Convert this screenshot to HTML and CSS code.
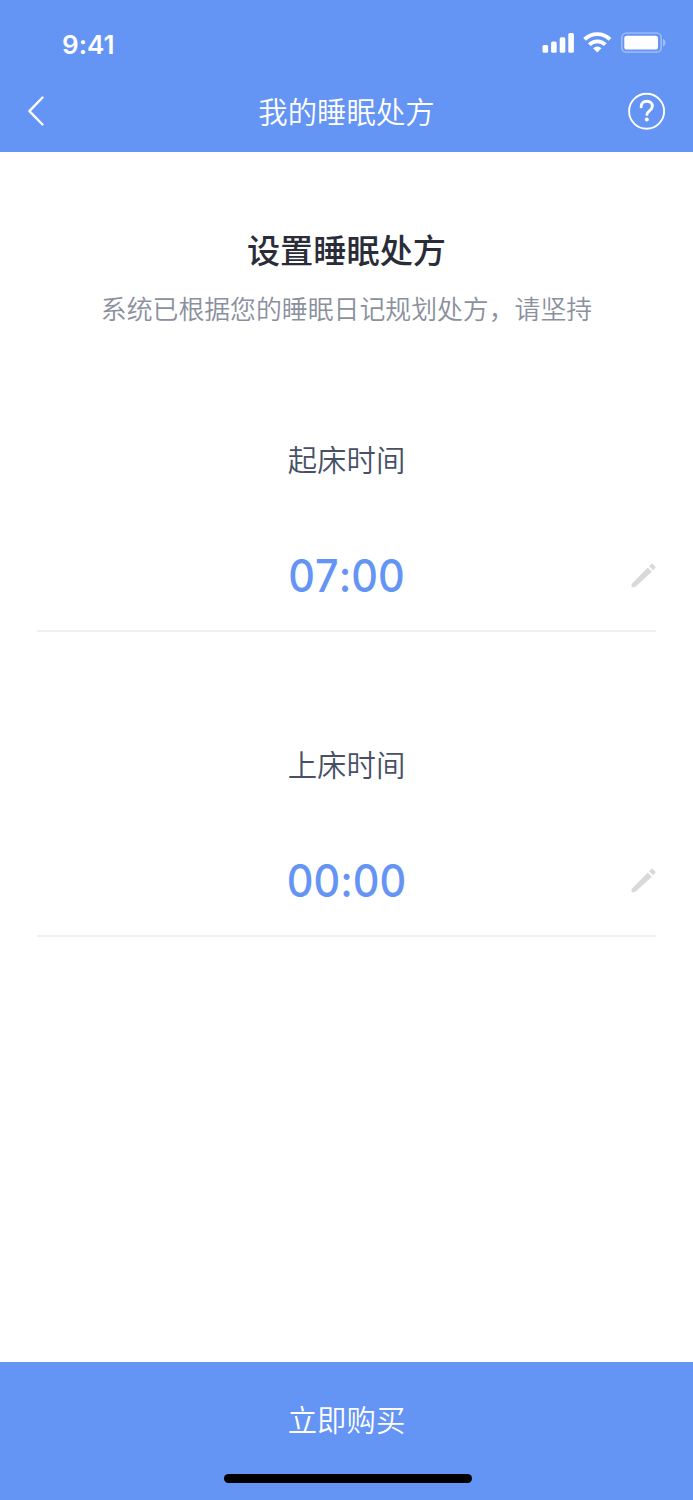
FILE: index.html
```html
<!DOCTYPE html>
<html lang="zh-CN">
<head>
<meta charset="utf-8">
<title>我的睡眠处方</title>
<link rel="stylesheet" href="styles.css">
</head>
<body>
<div class="screen">
  <header class="header">
    <div class="status">
      <span class="clock">9:41</span>
      <svg class="status-icons" width="126" height="24" viewBox="0 0 126 24" fill="#fff">
        <rect x="2.500" y="15" width="5.600" height="7.800" rx="1.500"/>
        <rect x="11.100" y="11.500" width="5.600" height="11.300" rx="1.500"/>
        <rect x="19.700" y="7.200" width="5.600" height="15.600" rx="1.500"/>
        <rect x="28.300" y="3" width="5.600" height="19.800" rx="1.500"/>
        <g fill="none" stroke="#fff" stroke-width="3.900">
          <path d="M44.600 9.400a18 18 0 0 1 25.400 0"/>
          <path d="M49.300 14.700a11.400 11.400 0 0 1 16 0"/>
        </g>
        <path d="M53.100 18.300a5.800 5.800 0 0 1 8.400 0l-4.200 4.300z"/>
        <rect x="81.800" y="3" width="39.400" height="19.200" rx="4.800" fill="none" stroke="#fff" stroke-width="1.700" opacity=".35"/>
        <rect x="84.300" y="5.700" width="33.700" height="13.800" rx="2.600"/>
        <path d="M123 9v7.600c1.500-.6 2.500-2.100 2.500-3.800S124.500 9.600 123 9z" opacity=".4"/>
      </svg>
    </div>
    <nav class="nav">
      <svg class="back" width="20" height="32" viewBox="0 0 20 32" fill="none" stroke="#fff" stroke-width="2.400" stroke-linecap="round" stroke-linejoin="round"><path d="M15.500 2.500 2.400 16.200l13.100 13.300"/></svg>
      <h1 class="nav-title">我的睡眠处方</h1>
      <svg class="help" width="38" height="38" viewBox="0 0 38 38" fill="none" stroke="#fff">
        <circle cx="18.600" cy="19.200" r="17.500" stroke-width="1.900"/>
        <path d="M13.100 14.900c0-3.500 2.300-5.700 5.700-5.700 3.300 0 5.600 2.100 5.600 5.100 0 4.400-5.500 4.600-5.500 8.300" stroke-width="2.900" stroke-linecap="round"/>
        <circle cx="18.800" cy="27.500" r="2" fill="#fff" stroke="none"/>
      </svg>
    </nav>
  </header>
  <main class="content">
    <h2 class="heading">设置睡眠处方</h2>
    <p class="subtitle">系统已根据您的睡眠日记规划处方，请坚持</p>
    <section class="field">
      <h3 class="label">起床时间</h3>
      <div class="value-row">
        <span class="time">07:00</span>
        <svg class="edit" width="26" height="26" viewBox="0 0 26 26" fill="#d8d9d9"><path d="M1.600 24.300v-3.300L17.800 4.600l4.100 4.100L5.800 23.400q-1.600.9-4.200.9zM19.100 3.300 21.300 1q.7-.7 1.400 0l2.600 2.600q.7.7 0 1.400l-2.200 2.300z"/></svg>
      </div>
    </section>
    <section class="field">
      <h3 class="label">上床时间</h3>
      <div class="value-row">
        <span class="time">00:00</span>
        <svg class="edit" width="26" height="26" viewBox="0 0 26 26" fill="#d8d9d9"><path d="M1.600 24.300v-3.300L17.800 4.600l4.100 4.100L5.800 23.400q-1.600.9-4.200.9zM19.100 3.300 21.300 1q.7-.7 1.400 0l2.600 2.600q.7.7 0 1.400l-2.200 2.300z"/></svg>
      </div>
    </section>
  </main>
  <footer class="footer">
    <span class="buy">立即购买</span>
    <span class="home-bar"></span>
  </footer>
</div>
</body>
</html>
```
FILE: styles.css
```css
* { box-sizing: border-box; }
body {
  margin: 0;
  background: #fff;
  font-family: "Noto Sans CJK SC", sans-serif;
}
h1, h2, h3, p { margin: 0; }
svg { display: block; }
.screen {
  display: flex;
  flex-direction: column;
  width: 693px;
  height: 1500px;
}
.header {
  height: 152px;
  background: #6494f4;
  color: #fff;
}
.status {
  display: flex;
  justify-content: space-between;
  height: 70px;
  padding: 30px 27px 0 62px;
}
.clock {
  font: 600 26px/30px Inter, sans-serif;
  font-feature-settings: "calt" 0;
}
.nav {
  display: grid;
  grid-template-columns: 38px 1fr 38px;
  align-items: center;
  height: 82px;
  padding: 0 27px;
}
.nav-title {
  padding-bottom: 2px;
  font-size: 29.4px;
  font-weight: 350;
  line-height: 44px;
  text-align: center;
}
.content {
  flex: 1;
  padding: 74px 37px 0;
}
.heading {
  color: #2a2d38;
  font-size: 33.2px;
  font-weight: 500;
  line-height: 46px;
  text-align: center;
}
.subtitle {
  margin-top: 17px;
  color: #8a909d;
  font-size: 25.87px;
  font-weight: 350;
  line-height: 38px;
  text-align: center;
  white-space: nowrap;
}
.field {
  height: 305px;
  border-bottom: 2px solid #edf0f0;
  padding-top: 109px;
}
.label {
  color: #475066;
  font-size: 29.4px;
  font-weight: 350;
  line-height: 44px;
  text-align: center;
}
.value-row {
  display: grid;
  grid-template-columns: 26px 1fr 26px;
  align-items: center;
  height: 54px;
  margin-top: 69px;
}
.time {
  grid-column: 2;
  color: #6494f4;
  font: 460 44.5px/54px Inter, sans-serif;
  font-feature-settings: "calt" 0;
  font-kerning: none;
  text-align: center;
  transform: scaleX(.93);
}
.footer {
  display: flex;
  flex-direction: column;
  align-items: center;
  height: 138px;
  padding-top: 34px;
  background: #6494f4;
  color: #fff;
}
.buy {
  font-size: 29.4px;
  font-weight: 350;
  line-height: 44px;
}
.home-bar {
  width: 248px;
  height: 9px;
  margin: 34px 0 0 2px;
  border-radius: 5px;
  background: #000;
}
```
